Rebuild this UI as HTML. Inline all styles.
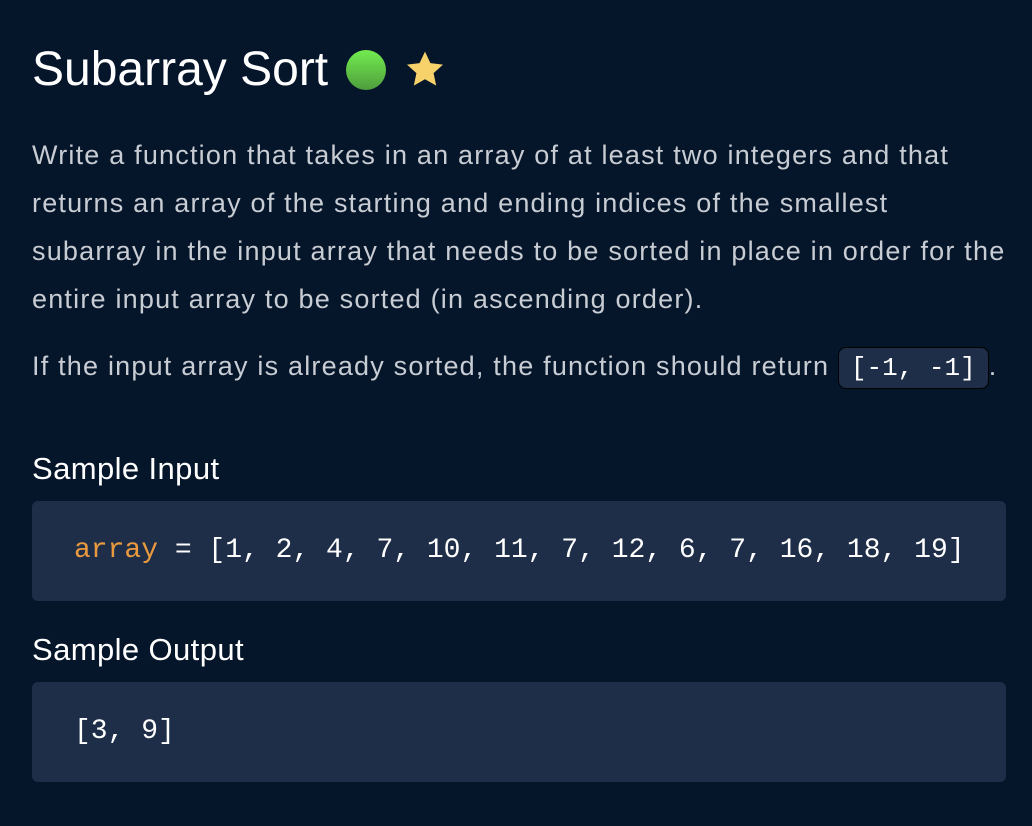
<!DOCTYPE html>
<html><head><meta charset="utf-8"><style>
html,body{margin:0;padding:0;background:#05152a;width:1032px;height:826px;overflow:hidden}
body{font-family:"Liberation Sans",sans-serif;color:#c8ccd3}
h1{position:absolute;left:32px;top:40px;margin:0;font-size:48px;font-weight:500;color:#fff;line-height:60px;letter-spacing:0px}
.dot{position:absolute;left:346px;top:50px;width:40px;height:40px;border-radius:50%;background:linear-gradient(#72ec4f,#4f9d3d)}
.star{position:absolute;left:404px;top:49px;width:42px;height:42px}
p{position:absolute;left:32px;margin:0;font-size:27px;line-height:48px;letter-spacing:1.2px;white-space:nowrap}
.ic{display:inline-block;background:#1e2e48;border:1.5px solid #000;border-radius:8px;padding:0 12px;line-height:40px;font-family:"Liberation Mono",monospace;font-size:26px;color:#fff;letter-spacing:0}
h2{position:absolute;left:32px;margin:0;font-size:31px;font-weight:500;color:#fff;letter-spacing:0.4px}
.code{position:absolute;left:32px;width:974px;background:#1e2e48;border-radius:6px;font-family:"Liberation Mono",monospace;font-size:28px;color:#fff;box-sizing:border-box;padding-left:42px}
.o{color:#e99a3f}
</style></head><body>
<h1>Subarray Sort</h1>
<div class="dot"></div>
<svg class="star" viewBox="0 0 24 24"><path d="M12 1.5l3.1 6.6 7.2.8-5.4 4.9 1.5 7.1L12 17.3l-6.4 3.6 1.5-7.1-5.4-4.9 7.2-.8z" fill="#f7d26b"/></svg>
<p style="top:131px">Write a function that takes in an array of at least two integers and that<br>returns an array of the starting and ending indices of the smallest<br>subarray in the input array that needs to be sorted in place in order for the<br>entire input array to be sorted (in ascending order).</p>
<p style="top:342px">If the input array is already sorted, the function should return <span class="ic">[-1, -1]</span>.</p>
<h2 style="top:451px">Sample Input</h2>
<div class="code" style="top:501px;height:100px;line-height:100px"><span class="o">array</span> = [1, 2, 4, 7, 10, 11, 7, 12, 6, 7, 16, 18, 19]</div>
<h2 style="top:632px">Sample Output</h2>
<div class="code" style="top:682px;height:100px;line-height:100px">[3, 9]</div>
</body></html>
